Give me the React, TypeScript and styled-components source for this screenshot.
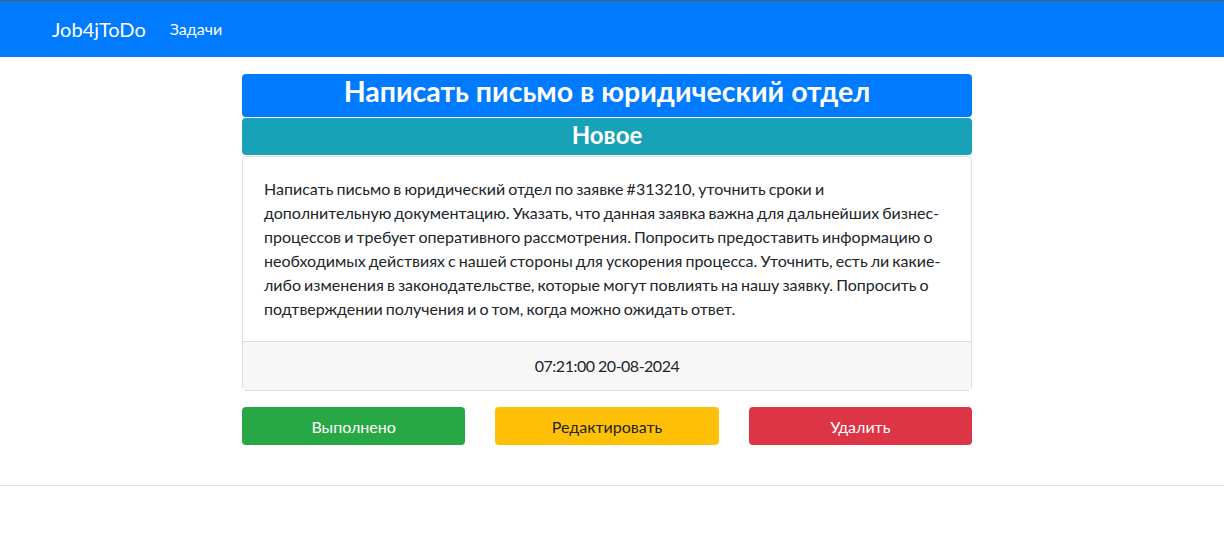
import React from 'react';
import styled, { createGlobalStyle } from 'styled-components';

const GlobalStyle = createGlobalStyle`
  body {
    margin: 0;
    font-family: Lato, "Noto Sans", sans-serif;
    font-size: 16px;
    line-height: 1.5;
    color: #212529;
    background: #fff;
    border-top: 1px solid #5a5a5a;
  }
  * { box-sizing: border-box; }
`;

const Navbar = styled.nav`
  display: flex;
  align-items: center;
  height: 56px;
  padding: 0 52px;
  background: #007bff;
`;

const Brand = styled.a`
  font-size: 20px;
  color: #fff;
  text-decoration: none;
  margin-right: 24px;
`;

const NavLink = styled.a`
  font-size: 16px;
  color: #fff;
  text-decoration: none;
`;

const Main = styled.main`
  width: 730px;
  margin: 17px 0 0 242px;
`;

const Banner = styled.div<{ $bg: string; $size: number; $h: number; $lift: number }>`
  height: ${(p) => p.$h}px;
  display: flex;
  align-items: center;
  justify-content: center;
  padding-bottom: ${(p) => p.$lift}px;
  background: ${(p) => p.$bg};
  color: #fff;
  border-radius: 4px;
  font-weight: 700;
  font-size: ${(p) => p.$size}px;
  margin-bottom: 1px;
`;

const Card = styled.div`
  border: 1px solid #dfdfdf;
  border-radius: 4px;
`;

const CardBody = styled.div`
  padding: 20px 20px 20px 21px;
  word-spacing: -1px;
`;

const CardFooter = styled.div`
  padding: 12px 20px;
  background: #f7f7f7;
  border-top: 1px solid #dfdfdf;
  text-align: center;
  letter-spacing: -0.5px;
`;

const Actions = styled.div`
  display: grid;
  grid-template-columns: repeat(3, 1fr);
  gap: 30px;
  margin-top: 16px;
`;

const Button = styled.button<{ $bg: string; $fg: string }>`
  height: 38px;
  border: none;
  border-radius: 4px;
  background: ${(p) => p.$bg};
  color: ${(p) => p.$fg};
  font-family: inherit;
  font-size: 16px;
  cursor: pointer;
`;

const Rule = styled.hr`
  margin: 40px 0 0;
  border: 0;
  border-top: 1px solid #e0e0e0;
`;

export default function App() {
  return (
    <>
      <GlobalStyle />
      <Navbar>
        <Brand href="#">Job4jToDo</Brand>
        <NavLink href="#">Задачи</NavLink>
      </Navbar>
      <Main>
        <Banner $bg="#007bff" $size={28.5} $h={43} $lift={8}>Написать письмо в юридический отдел</Banner>
        <Banner $bg="#17a2b8" $size={24} $h={37} $lift={4}>Новое</Banner>
        <Card>
          <CardBody>
            Написать письмо в юридический отдел по заявке #313210, уточнить сроки и дополнительную
            документацию. Указать, что данная заявка важна для дальнейших бизнес-процессов и требует
            оперативного рассмотрения. Попросить предоставить информацию о необходимых действиях с
            нашей стороны для ускорения процесса. Уточнить, есть ли какие-либо изменения в
            законодательстве, которые могут повлиять на нашу заявку. Попросить о подтверждении
            получения и о том, когда можно ожидать ответ.
          </CardBody>
          <CardFooter>07:21:00 20-08-2024</CardFooter>
        </Card>
        <Actions>
          <Button $bg="#28a745" $fg="#fff">Выполнено</Button>
          <Button $bg="#ffc107" $fg="#212529">Редактировать</Button>
          <Button $bg="#dc3545" $fg="#fff">Удалить</Button>
        </Actions>
      </Main>
      <Rule />
    </>
  );
}
